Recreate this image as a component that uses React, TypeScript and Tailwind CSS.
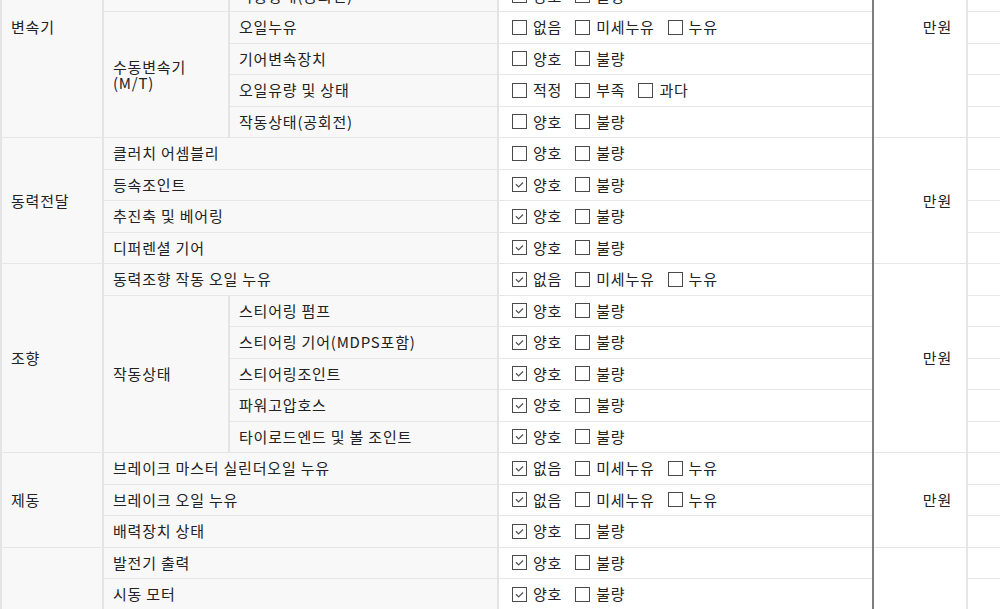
import React from 'react';

type Opt = { label: string; checked?: boolean };

interface Row {
  item: string;
  opts: Opt[];
  group?: { label: string[]; span: number };
  nested?: boolean;
}

interface Section {
  name: string;
  rows: Row[];
}

const leak = (checked?: boolean): Opt[] => [
  { label: '없음', checked },
  { label: '미세누유' },
  { label: '누유' },
];

const good = (checked?: boolean): Opt[] => [
  { label: '양호', checked },
  { label: '불량' },
];

const level = (): Opt[] => [{ label: '적정' }, { label: '부족' }, { label: '과다' }];

const sections: Section[] = [
  {
    name: '변속기',
    rows: [
      { item: '오일누유', opts: leak(), group: { label: ['자동변속기', '(A/T)'], span: 3 }, nested: true },
      { item: '오일유량 및 상태', opts: level(), nested: true },
      { item: '작동상태(공회전)', opts: good(), nested: true },
      { item: '오일누유', opts: leak(), group: { label: ['수동변속기', '(M/T)'], span: 4 }, nested: true },
      { item: '기어변속장치', opts: good(), nested: true },
      { item: '오일유량 및 상태', opts: level(), nested: true },
      { item: '작동상태(공회전)', opts: good(), nested: true },
    ],
  },
  {
    name: '동력전달',
    rows: [
      { item: '클러치 어셈블리', opts: good() },
      { item: '등속조인트', opts: good(true) },
      { item: '추진축 및 베어링', opts: good(true) },
      { item: '디퍼렌셜 기어', opts: good(true) },
    ],
  },
  {
    name: '조향',
    rows: [
      { item: '동력조향 작동 오일 누유', opts: leak(true) },
      { item: '스티어링 펌프', opts: good(true), group: { label: ['작동상태'], span: 5 }, nested: true },
      { item: '스티어링 기어(MDPS포함)', opts: good(true), nested: true },
      { item: '스티어링조인트', opts: good(true), nested: true },
      { item: '파워고압호스', opts: good(true), nested: true },
      { item: '타이로드엔드 및 볼 조인트', opts: good(true), nested: true },
    ],
  },
  {
    name: '제동',
    rows: [
      { item: '브레이크 마스터 실린더오일 누유', opts: leak(true) },
      { item: '브레이크 오일 누유', opts: leak(true) },
      { item: '배력장치 상태', opts: good(true) },
    ],
  },
  {
    name: '전기',
    rows: [
      { item: '발전기 출력', opts: good(true) },
      { item: '시동 모터', opts: good(true) },
      { item: '와이퍼 모터 기능', opts: good(true) },
      { item: '실내송풍 모터', opts: good(true) },
      { item: '라디에이터 팬 모터', opts: good(true) },
      { item: '윈도우 모터', opts: good(true) },
    ],
  },
];

const CheckBox: React.FC<Opt> = ({ label, checked }) => (
  <span className="inline-flex items-center mr-[13px]">
    <span className="w-[15px] h-[15px] border border-[#4a4a4a] bg-white flex items-center justify-center">
      {checked && (
        <svg width="13" height="13" viewBox="0 0 13 13">
          <path d="M3 6.3 L5.6 8.9 L10 4.5" fill="none" stroke="#555" strokeWidth="1.3" />
        </svg>
      )}
    </span>
    <span className="ml-[6px]">{label}</span>
  </span>
);

const grayCell = 'bg-[#f8f8f8] border-y border-y-[#e6e6e6] border-x-2 border-x-[#e4e4e4] align-middle';

export default function App() {
  return (
    <div className="w-[1000px] h-[609px] overflow-hidden bg-white">
      <table className="-mt-[83.5px] table-fixed border-collapse w-[1026px] text-[15px] leading-[18px] tracking-[0.8px] text-[#222] font-['Noto_Sans_CJK_KR','Noto_Sans',sans-serif]">
        <colgroup>
          <col className="w-[102px]" />
          <col className="w-[126px]" />
          <col className="w-[269px]" />
          <col className="w-[375px]" />
          <col className="w-[94px]" />
          <col className="w-[60px]" />
        </colgroup>
        <tbody>
          {sections.map((sec) =>
            sec.rows.map((row, i) => (
              <tr key={`${sec.name}-${i}`} className="h-[31.5px]">
                {i === 0 && (
                  <td rowSpan={sec.rows.length} className={`${grayCell} pl-[9px]`}>
                    {sec.name}
                  </td>
                )}
                {row.group && (
                  <td rowSpan={row.group.span} className={`${grayCell} pl-[9px] leading-[16px]`}>
                    {row.group.label.map((l, k) => (
                      <div key={k}>{l}</div>
                    ))}
                  </td>
                )}
                <td colSpan={row.nested ? 1 : 2} className={`${grayCell} pl-[9px] whitespace-nowrap`}>
                  {row.item}
                </td>
                {/* 점검 결과 */}
                <td className="bg-white border-y border-y-[#e6e6e6] border-l-2 border-l-[#e4e4e4] border-r-2 border-r-[#7d7d7d] pl-[13px] whitespace-nowrap">
                  <div className="flex items-center">
                    {row.opts.map((o, k) => (
                      <CheckBox key={k} label={o.label} checked={o.checked} />
                    ))}
                  </div>
                </td>
                {i === 0 && (
                  <td
                    rowSpan={sec.rows.length}
                    className="bg-white border-y border-y-[#e6e6e6] border-r-2 border-r-[#e6e6e6] text-right pr-[14px] align-middle"
                  >
                    만원
                  </td>
                )}
                <td className="bg-white border-y border-y-[#e6e6e6]" />
              </tr>
            ))
          )}
        </tbody>
      </table>
    </div>
  );
}
